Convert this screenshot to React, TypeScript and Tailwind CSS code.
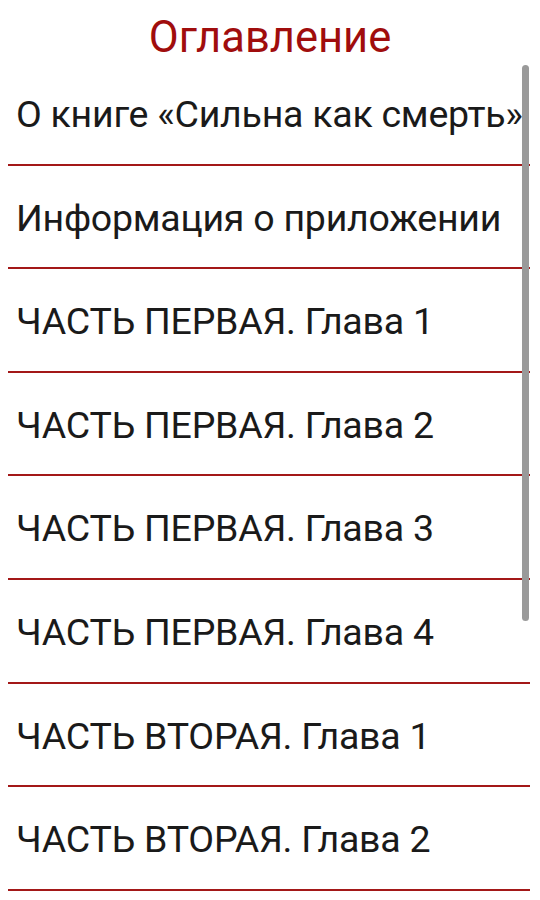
import React from "react";

const items = [
  "О книге «Сильна как смерть»",
  "Информация о приложении",
  "ЧАСТЬ ПЕРВАЯ. Глава 1",
  "ЧАСТЬ ПЕРВАЯ. Глава 2",
  "ЧАСТЬ ПЕРВАЯ. Глава 3",
  "ЧАСТЬ ПЕРВАЯ. Глава 4",
  "ЧАСТЬ ВТОРАЯ. Глава 1",
  "ЧАСТЬ ВТОРАЯ. Глава 2",
];

export default function App() {
  return (
    <div
      className="relative w-[540px] h-[900px] overflow-hidden bg-white"
      style={{ fontFamily: "Roboto, 'Noto Sans', sans-serif" }}
    >
      <div className="h-[62px] flex items-center justify-center pt-[14px]">
        <span className="text-[43.5px] leading-[48px] text-[#a00d0d]">Оглавление</span>
      </div>
      <div className="flex flex-col">
        {items.map((t) => (
          <div key={t} className="ml-[8px] w-[522px] h-[103.6px] flex items-center pt-[4px] border-b-2 border-[#a31818]">
            <span className="pl-[8px] text-[37.5px] leading-none text-[#1a1a1a] whitespace-nowrap tracking-[-0.25px]">{t}</span>
          </div>
        ))}
      </div>
      <div className="absolute left-[522px] top-[65px] w-[7px] h-[556px] rounded-full bg-[#9a9a9a]" />
    </div>
  );
}
